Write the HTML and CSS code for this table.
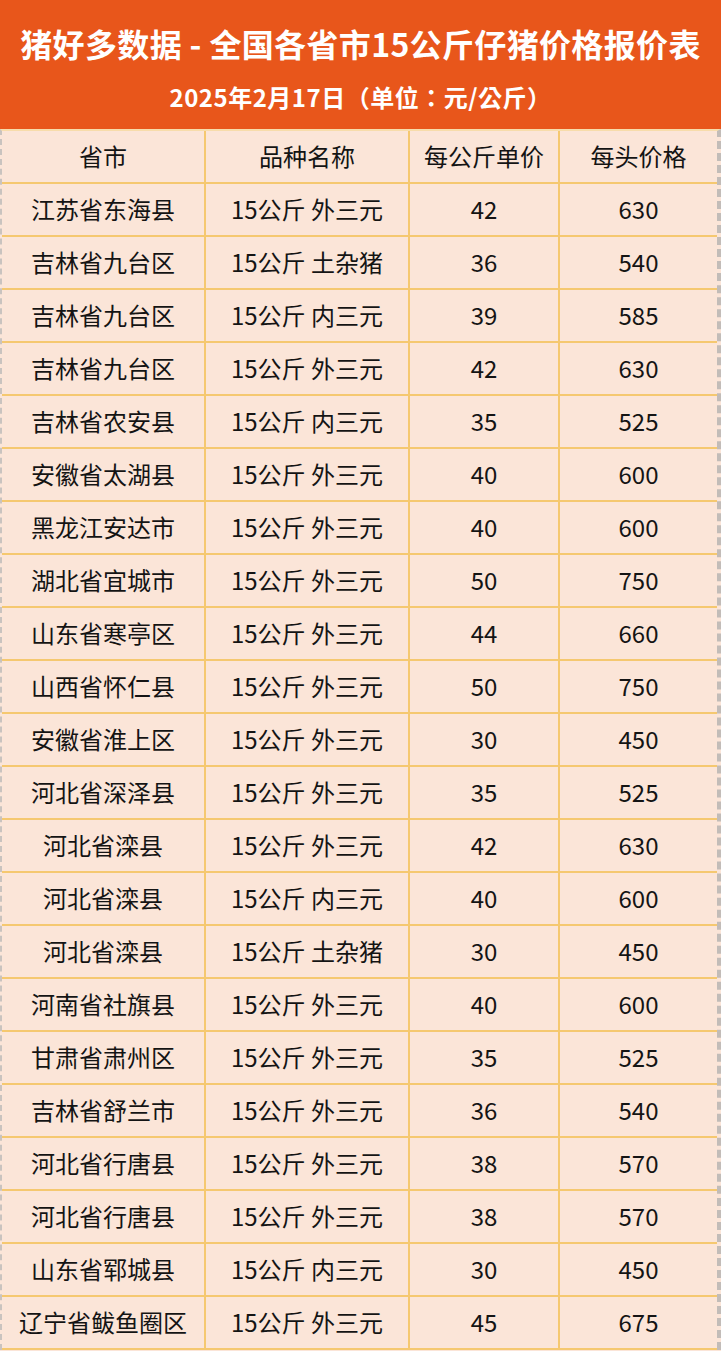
FILE: index.html
```html
<!DOCTYPE html>
<html>
<head>
<meta charset="utf-8">
<title>猪好多数据</title>
<link rel="stylesheet" href="styles.css">
</head>
<body>
<div class="page">
  <header class="banner">
    <h1 class="title">猪好多数据 - 全国各省市15公斤仔猪价格报价表</h1>
    <p class="subtitle">2025年2月17日（单位：元/公斤）</p>
  </header>
  <div class="sheet">
    <div class="grid">
      <div class="cell head">省市</div><div class="cell head">品种名称</div><div class="cell head">每公斤单价</div><div class="cell head last">每头价格</div>
      <div class="cell">江苏省东海县</div><div class="cell">15公斤 外三元</div><div class="cell">42</div><div class="cell last">630</div>
      <div class="cell">吉林省九台区</div><div class="cell">15公斤 土杂猪</div><div class="cell">36</div><div class="cell last">540</div>
      <div class="cell">吉林省九台区</div><div class="cell">15公斤 内三元</div><div class="cell">39</div><div class="cell last">585</div>
      <div class="cell">吉林省九台区</div><div class="cell">15公斤 外三元</div><div class="cell">42</div><div class="cell last">630</div>
      <div class="cell">吉林省农安县</div><div class="cell">15公斤 内三元</div><div class="cell">35</div><div class="cell last">525</div>
      <div class="cell">安徽省太湖县</div><div class="cell">15公斤 外三元</div><div class="cell">40</div><div class="cell last">600</div>
      <div class="cell">黑龙江安达市</div><div class="cell">15公斤 外三元</div><div class="cell">40</div><div class="cell last">600</div>
      <div class="cell">湖北省宜城市</div><div class="cell">15公斤 外三元</div><div class="cell">50</div><div class="cell last">750</div>
      <div class="cell">山东省寒亭区</div><div class="cell">15公斤 外三元</div><div class="cell">44</div><div class="cell last">660</div>
      <div class="cell">山西省怀仁县</div><div class="cell">15公斤 外三元</div><div class="cell">50</div><div class="cell last">750</div>
      <div class="cell">安徽省淮上区</div><div class="cell">15公斤 外三元</div><div class="cell">30</div><div class="cell last">450</div>
      <div class="cell">河北省深泽县</div><div class="cell">15公斤 外三元</div><div class="cell">35</div><div class="cell last">525</div>
      <div class="cell">河北省滦县</div><div class="cell">15公斤 外三元</div><div class="cell">42</div><div class="cell last">630</div>
      <div class="cell">河北省滦县</div><div class="cell">15公斤 内三元</div><div class="cell">40</div><div class="cell last">600</div>
      <div class="cell">河北省滦县</div><div class="cell">15公斤 土杂猪</div><div class="cell">30</div><div class="cell last">450</div>
      <div class="cell">河南省社旗县</div><div class="cell">15公斤 外三元</div><div class="cell">40</div><div class="cell last">600</div>
      <div class="cell">甘肃省肃州区</div><div class="cell">15公斤 外三元</div><div class="cell">35</div><div class="cell last">525</div>
      <div class="cell">吉林省舒兰市</div><div class="cell">15公斤 外三元</div><div class="cell">36</div><div class="cell last">540</div>
      <div class="cell">河北省行唐县</div><div class="cell">15公斤 外三元</div><div class="cell">38</div><div class="cell last">570</div>
      <div class="cell">河北省行唐县</div><div class="cell">15公斤 外三元</div><div class="cell">38</div><div class="cell last">570</div>
      <div class="cell">山东省郓城县</div><div class="cell">15公斤 内三元</div><div class="cell">30</div><div class="cell last">450</div>
      <div class="cell">辽宁省鲅鱼圈区</div><div class="cell">15公斤 外三元</div><div class="cell">45</div><div class="cell last">675</div>
    </div>
  </div>
</div>
</body>
</html>
```

FILE: styles.css
```css
html, body {
  margin: 0;
  padding: 0;
  background: #fbe5d8;
}
body {
  font-family: "Noto Sans CJK SC", "Noto Sans", sans-serif;
  color: #141414;
}
.page {
  width: 721px;
}
.banner {
  height: 129px;
  background: #e8561b;
  color: #ffffff;
  display: flex;
  flex-direction: column;
  align-items: center;
  box-sizing: border-box;
  padding-top: 20px;
}
.title {
  margin: 0;
  font-size: 32px;
  line-height: 46px;
  font-weight: 700;
  letter-spacing: 0.35px;
  white-space: nowrap;
}
.subtitle {
  margin: 15px 0 0 0;
  font-family: "Noto Sans CJK TC", "Noto Sans CJK SC", sans-serif;
  font-size: 24px;
  line-height: 32px;
  font-weight: 700;
  letter-spacing: 0.5px;
  white-space: nowrap;
}
.sheet {
  border-left: 2px dashed #c9c3bf;
  border-right: 4px dashed #c2bcb8;
  border-top: 2px solid #f7dcab;
  background: #fbe5d8;
}
.grid {
  display: grid;
  grid-template-columns: 204px 204px 150px 157px;
}
.cell {
  height: 53px;
  box-sizing: border-box;
  border-bottom: 2px solid #f5c870;
  border-right: 2px solid #f5c870;
  display: flex;
  align-items: center;
  justify-content: center;
  font-size: 24px;
  line-height: 1;
  white-space: nowrap;
  padding-bottom: 1px;
}
.cell.last {
  border-right: none;
}
.cell.head {
  height: 53px;
}
```
